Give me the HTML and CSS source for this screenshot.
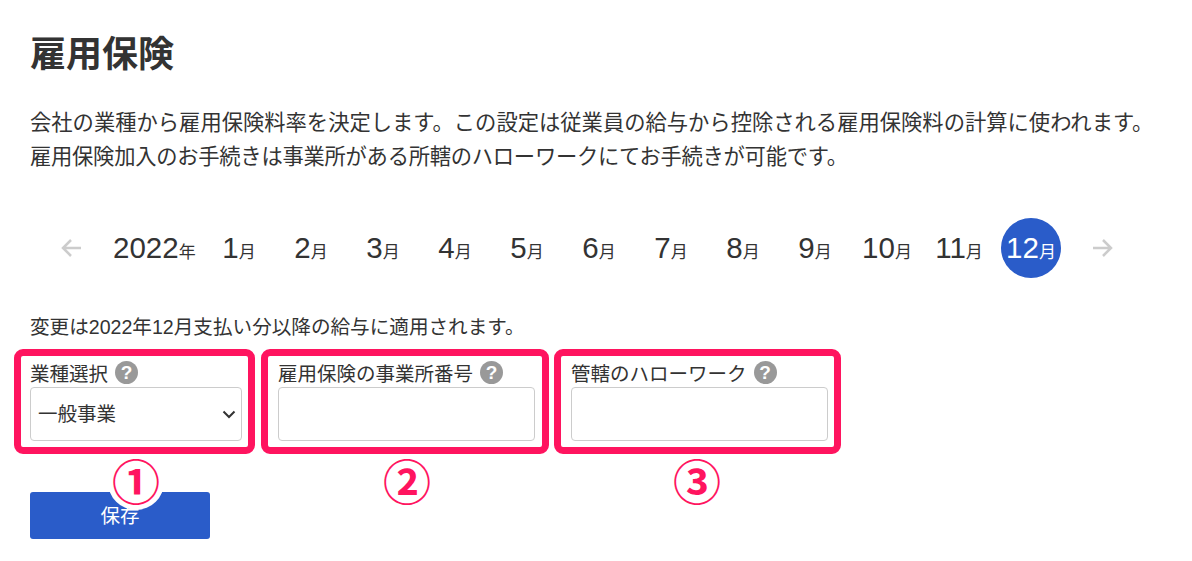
FILE: index.html
```html
<!DOCTYPE html>
<html lang="ja">
<head>
    <meta charset="UTF-8">
    <title>雇用保険</title>
    <link rel="stylesheet" href="styles.css">
</head>
<body>

<div class="page">
    <h1>雇用保険</h1>
    <p class="intro">会社の業種から雇用保険料率を決定します。この設定は従業員の給与から控除される雇用保険料の計算に使われます。<br><span class="intro-tight">雇用保険加入のお手続きは事業所がある所轄のハローワークにてお手続きが可能です。</span></p>

    <div class="month-nav">
        <svg class="arrow arrow-left" width="22" height="20" viewBox="0 0 22 20"><path d="M20 10H2M10 2l-8 8 8 8"/></svg>
        <div class="year">2022<small>年</small></div>
        <div class="months">
            <div class="month">1<small>月</small></div>
            <div class="month">2<small>月</small></div>
            <div class="month">3<small>月</small></div>
            <div class="month">4<small>月</small></div>
            <div class="month">5<small>月</small></div>
            <div class="month">6<small>月</small></div>
            <div class="month">7<small>月</small></div>
            <div class="month">8<small>月</small></div>
            <div class="month">9<small>月</small></div>
            <div class="month">10<small>月</small></div>
            <div class="month">11<small>月</small></div>
            <div class="month active">12<small>月</small></div>
        </div>
        <svg class="arrow arrow-right" width="22" height="20" viewBox="0 0 22 20"><path d="M2 10h18M12 2l8 8-8 8"/></svg>
    </div>

    <p class="notice">変更は2022年12月支払い分以降の給与に適用されます。</p>

    <form class="fields">
        <div class="field field-type">
            <label>業種選択 <span class="help">?</span></label>
            <div class="select-wrap">
                <select>
                    <option>一般事業</option>
                </select>
                <svg class="chevron" width="14" height="9" viewBox="0 0 14 9"><path d="M1.500 1.500L7 7l5.500-5.500"/></svg>
            </div>
        </div>
        <div class="field">
            <label>雇用保険の事業所番号 <span class="help">?</span></label>
            <input type="text">
        </div>
        <div class="field">
            <label>管轄のハローワーク <span class="help">?</span></label>
            <input type="text">
        </div>
    </form>

    <button type="button" class="save-btn">保存</button>
</div>

<!-- annotations on top of the screenshot -->
<div class="mark-box mark-box-1"></div>
<div class="mark-box mark-box-2"></div>
<div class="mark-box mark-box-3"></div>
<div class="mark-num mark-num-1">①</div>
<div class="mark-num mark-num-2">②</div>
<div class="mark-num mark-num-3">③</div>

</body>
</html>
```

FILE: styles.css
```css
html, body {
    height: 561px;
    overflow: hidden;
}
body {
    font-family: "Liberation Sans", "Noto Sans CJK JP", sans-serif;
    background: #ffffff;
    color: #333333;
    margin: 0;
    padding: 0;
    position: relative;
}
.page {
    padding: 35px 30px 0;
}
h1 {
    font-size: 36px;
    line-height: 40px;
    font-weight: bold;
    margin: 0 0 31px;
}
.intro {
    font-size: 21.300px;
    line-height: 34px;
    margin: 0 0 44px;
    white-space: nowrap;
}
.intro-tight {
    letter-spacing: -0.26px;
}

/* Month picker */
.month-nav {
    display: flex;
    align-items: center;
    height: 60px;
    padding-left: 31px;
}
.arrow {
    fill: none;
    stroke: #cccccc;
    stroke-width: 2.500;
    flex-shrink: 0;
}
.arrow-right {
    margin-left: 30px;
}
.year {
    margin-left: 30px;
    width: 96px;
    font-size: 29.500px;
    white-space: nowrap;
}
.months {
    display: flex;
    gap: 12px;
}
.month {
    width: 60px;
    height: 60px;
    line-height: 60px;
    text-align: center;
    font-size: 29.500px;
    border-radius: 50%;
    white-space: nowrap;
}
.year small, .month small {
    font-size: 17px;
}
.month.active {
    background: #2a5cc9;
    color: #ffffff;
}

.notice {
    font-size: 19.600px;
    line-height: 28px;
    margin: 35px 0 0;
    white-space: nowrap;
}

/* Form */
.fields {
    display: flex;
    gap: 36px;
    margin-top: 14px;
}
.field {
    width: 257px;
}
.field-type {
    width: 212px;
}
.field label {
    display: flex;
    align-items: center;
    gap: 7px;
    height: 29px;
    padding-top: 3px;
    font-size: 19.500px;
    white-space: nowrap;
}
.help {
    display: inline-block;
    width: 23px;
    height: 23px;
    line-height: 23px;
    border-radius: 50%;
    background: #999999;
    color: #ffffff;
    font-size: 19px;
    font-weight: bold;
    text-align: center;
}
.field input, .field select {
    display: block;
    box-sizing: border-box;
    width: 100%;
    height: 54px;
    border: 1px solid #cccccc;
    border-radius: 4px;
    background: #ffffff;
    color: #333333;
    font-family: inherit;
    font-size: 19.500px;
    padding: 0 7px;
    margin: 0;
    appearance: none;
}
.select-wrap {
    position: relative;
}
.chevron {
    position: absolute;
    right: 6px;
    top: 23px;
    fill: none;
    stroke: #333333;
    stroke-width: 2;
}
.save-btn {
    display: block;
    box-sizing: border-box;
    width: 180px;
    height: 47px;
    margin-top: 51px;
    padding: 0 0 3px;
    border: none;
    border-radius: 3px;
    background: #2a5cc9;
    color: #ffffff;
    font-family: inherit;
    font-size: 19.500px;
}

/* Annotations */
.mark-box {
    position: absolute;
    top: 349px;
    height: 105px;
    box-sizing: border-box;
    border: 7px solid #ff145f;
    border-radius: 9px;
}
.mark-box-1 { left: 14px; width: 241px; }
.mark-box-2 { left: 261px; width: 288px; }
.mark-box-3 { left: 554px; width: 287px; }
.mark-num {
    position: absolute;
    top: 454px;
    width: 56px;
    height: 56px;
    line-height: 50px;
    border-radius: 50%;
    background: #ffffff;
    color: #ff145f;
    font-family: "Noto Sans CJK JP", sans-serif;
    font-size: 48px;
    font-weight: bold;
    text-align: center;
}
.mark-num-1 { left: 108px; }
.mark-num-2 { left: 379px; }
.mark-num-3 { left: 669px; }
```
